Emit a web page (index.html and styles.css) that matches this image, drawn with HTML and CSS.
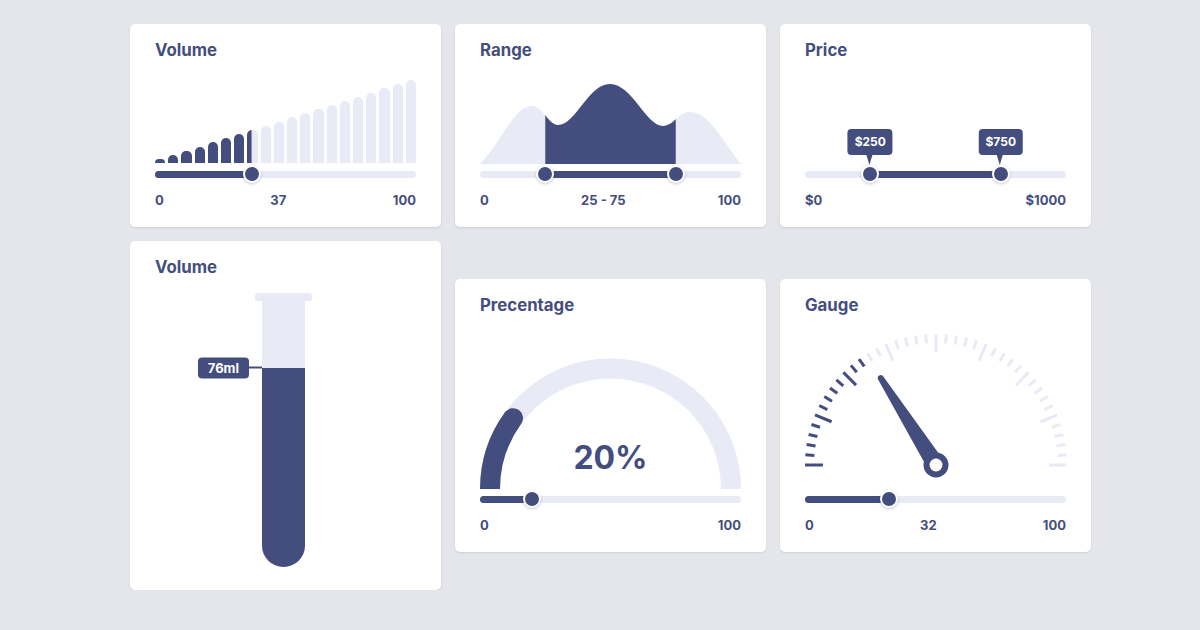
FILE: index.html
```html
<!DOCTYPE html>
<html lang="en">
<head>
<meta charset="utf-8">
<title>Sliders</title>
<link rel="stylesheet" href="styles.css">
</head>
<body>
<main class="board">

  <section class="card">
    <h2 class="card-title">Volume</h2>
    <div class="chart chart-bars">
      <div class="bars">
        <span class="bar" style="height:4px"></span><span class="bar" style="height:8.2px"></span><span class="bar" style="height:12.3px"></span><span class="bar" style="height:16.5px"></span><span class="bar" style="height:20.6px"></span><span class="bar" style="height:24.8px"></span><span class="bar" style="height:29px"></span><span class="bar" style="height:33.1px"></span><span class="bar" style="height:37.3px"></span><span class="bar" style="height:41.4px"></span><span class="bar" style="height:45.6px"></span><span class="bar" style="height:49.7px"></span><span class="bar" style="height:53.9px"></span><span class="bar" style="height:58.1px"></span><span class="bar" style="height:62.2px"></span><span class="bar" style="height:66.4px"></span><span class="bar" style="height:70.5px"></span><span class="bar" style="height:74.7px"></span><span class="bar" style="height:78.8px"></span><span class="bar" style="height:83px"></span>
      </div>
      <div class="bars bars-on" style="clip-path:inset(0 63% 0 0)">
        <span class="bar" style="height:4px"></span><span class="bar" style="height:8.2px"></span><span class="bar" style="height:12.3px"></span><span class="bar" style="height:16.5px"></span><span class="bar" style="height:20.6px"></span><span class="bar" style="height:24.8px"></span><span class="bar" style="height:29px"></span><span class="bar" style="height:33.1px"></span><span class="bar" style="height:37.3px"></span><span class="bar" style="height:41.4px"></span><span class="bar" style="height:45.6px"></span><span class="bar" style="height:49.7px"></span><span class="bar" style="height:53.9px"></span><span class="bar" style="height:58.1px"></span><span class="bar" style="height:62.2px"></span><span class="bar" style="height:66.4px"></span><span class="bar" style="height:70.5px"></span><span class="bar" style="height:74.7px"></span><span class="bar" style="height:78.8px"></span><span class="bar" style="height:83px"></span>
      </div>
    </div>
    <div class="slider">
      <div class="track">
        <div class="fill" style="width:37%"></div>
        <span class="thumb" style="left:37%"></span>
      </div>
    </div>
    <div class="scale"><span>0</span><span>37</span><span>100</span></div>
  </section>

  <section class="card">
    <h2 class="card-title">Range</h2>
    <div class="chart chart-bottom">
      <svg class="area" viewBox="0 0 261 80" width="261" height="80">
        <defs>
          <clipPath id="range-clip"><rect x="65.25" y="0" width="130.5" height="80"/></clipPath>
        </defs>
        <path class="area-off" d="M0,80 C20,60 34,22 52,22 C63,22 68,41 78,41 C96,41 108,0 130,0 C152,0 166,42 183,42 C194,42 198,28 210,28 C230,28 244,60 261,80 Z"/>
        <path class="area-on" clip-path="url(#range-clip)" d="M0,80 C20,60 34,22 52,22 C63,22 68,41 78,41 C96,41 108,0 130,0 C152,0 166,42 183,42 C194,42 198,28 210,28 C230,28 244,60 261,80 Z"/>
      </svg>
    </div>
    <div class="slider">
      <div class="track">
        <div class="fill" style="margin-left:25%;width:50%"></div>
        <span class="thumb" style="left:25%"></span>
        <span class="thumb" style="left:75%"></span>
      </div>
    </div>
    <div class="scale"><span>0</span><span>25 - 75</span><span>100</span></div>
  </section>

  <section class="card">
    <h2 class="card-title">Price</h2>
    <div class="chart"></div>
    <div class="slider">
      <div class="track">
        <div class="fill" style="margin-left:25%;width:50%"></div>
        <span class="thumb" style="left:25%"><span class="tip">$250</span></span>
        <span class="thumb" style="left:75%"><span class="tip">$750</span></span>
      </div>
    </div>
    <div class="scale"><span>$0</span><span>$1000</span></div>
  </section>

  <section class="card card-tube">
    <h2 class="card-title">Volume</h2>
    <div class="tube-wrap">
      <div class="tube-lip"></div>
      <div class="tube">
        <div class="tube-fill" style="height:75%">
          <span class="tube-level">76ml</span>
        </div>
      </div>
    </div>
  </section>

  <section class="card">
    <h2 class="card-title">Precentage</h2>
    <div class="chart chart-tall">
      <svg class="dial" viewBox="0 0 261 174" width="261" height="174">
        <path class="arc-off" d="M10,174 A120.5,120.5 0 0 1 251,174"/>
        <path class="arc-on" d="M10,174 A120.5,120.5 0 0 1 33,103.2"/>
        <text class="dial-value" x="130.5" y="154" text-anchor="middle">20%</text>
      </svg>
    </div>
    <div class="slider">
      <div class="track">
        <div class="fill" style="width:20%"></div>
        <span class="thumb" style="left:20%"></span>
      </div>
    </div>
    <div class="scale"><span>0</span><span>100</span></div>
  </section>

  <section class="card">
    <h2 class="card-title">Gauge</h2>
    <div class="chart chart-tall">
      <svg class="dial" viewBox="0 0 261 174" width="261" height="174">
        <g transform="translate(131,150)">
          <g class="ticks-on">
            <line x1="-131" y1="0" x2="-113" y2="0" transform="rotate(0)"/>
            <line x1="-131" y1="0" x2="-122" y2="0" transform="rotate(4.5)"/>
            <line x1="-131" y1="0" x2="-122" y2="0" transform="rotate(9)"/>
            <line x1="-131" y1="0" x2="-122" y2="0" transform="rotate(13.5)"/>
            <line x1="-131" y1="0" x2="-122" y2="0" transform="rotate(18)"/>
            <line x1="-131" y1="0" x2="-113" y2="0" transform="rotate(22.5)"/>
            <line x1="-131" y1="0" x2="-122" y2="0" transform="rotate(27)"/>
            <line x1="-131" y1="0" x2="-122" y2="0" transform="rotate(31.5)"/>
            <line x1="-131" y1="0" x2="-122" y2="0" transform="rotate(36)"/>
            <line x1="-131" y1="0" x2="-122" y2="0" transform="rotate(40.5)"/>
            <line x1="-131" y1="0" x2="-113" y2="0" transform="rotate(45)"/>
            <line x1="-131" y1="0" x2="-122" y2="0" transform="rotate(49.5)"/>
            <line x1="-131" y1="0" x2="-122" y2="0" transform="rotate(54)"/>
          </g>
          <g class="ticks-off">
            <line x1="-131" y1="0" x2="-122" y2="0" transform="rotate(58.5)"/>
            <line x1="-131" y1="0" x2="-122" y2="0" transform="rotate(63)"/>
            <line x1="-131" y1="0" x2="-113" y2="0" transform="rotate(67.5)"/>
            <line x1="-131" y1="0" x2="-122" y2="0" transform="rotate(72)"/>
            <line x1="-131" y1="0" x2="-122" y2="0" transform="rotate(76.5)"/>
            <line x1="-131" y1="0" x2="-122" y2="0" transform="rotate(81)"/>
            <line x1="-131" y1="0" x2="-122" y2="0" transform="rotate(85.5)"/>
            <line x1="-131" y1="0" x2="-113" y2="0" transform="rotate(90)"/>
            <line x1="-131" y1="0" x2="-122" y2="0" transform="rotate(94.5)"/>
            <line x1="-131" y1="0" x2="-122" y2="0" transform="rotate(99)"/>
            <line x1="-131" y1="0" x2="-122" y2="0" transform="rotate(103.5)"/>
            <line x1="-131" y1="0" x2="-122" y2="0" transform="rotate(108)"/>
            <line x1="-131" y1="0" x2="-113" y2="0" transform="rotate(112.5)"/>
            <line x1="-131" y1="0" x2="-122" y2="0" transform="rotate(117)"/>
            <line x1="-131" y1="0" x2="-122" y2="0" transform="rotate(121.5)"/>
            <line x1="-131" y1="0" x2="-122" y2="0" transform="rotate(126)"/>
            <line x1="-131" y1="0" x2="-122" y2="0" transform="rotate(130.5)"/>
            <line x1="-131" y1="0" x2="-113" y2="0" transform="rotate(135)"/>
            <line x1="-131" y1="0" x2="-122" y2="0" transform="rotate(139.5)"/>
            <line x1="-131" y1="0" x2="-122" y2="0" transform="rotate(144)"/>
            <line x1="-131" y1="0" x2="-122" y2="0" transform="rotate(148.5)"/>
            <line x1="-131" y1="0" x2="-122" y2="0" transform="rotate(153)"/>
            <line x1="-131" y1="0" x2="-113" y2="0" transform="rotate(157.5)"/>
            <line x1="-131" y1="0" x2="-122" y2="0" transform="rotate(162)"/>
            <line x1="-131" y1="0" x2="-122" y2="0" transform="rotate(166.5)"/>
            <line x1="-131" y1="0" x2="-122" y2="0" transform="rotate(171)"/>
            <line x1="-131" y1="0" x2="-122" y2="0" transform="rotate(175.5)"/>
            <line x1="-131" y1="0" x2="-113" y2="0" transform="rotate(180)"/>
          </g>
          <path class="needle" transform="rotate(57.6)" d="M0,-9 L-103,-3 A3,3 0 0 0 -103,3 L0,9 Z"/>
          <circle class="needle" r="12.5"/>
          <circle class="pivot" r="6.5"/>
        </g>
      </svg>
    </div>
    <div class="slider">
      <div class="track">
        <div class="fill" style="width:32%"></div>
        <span class="thumb" style="left:32%"></span>
      </div>
    </div>
    <div class="scale"><span>0</span><span>32</span><span>100</span></div>
  </section>

</main>
</body>
</html>
```

FILE: styles.css
```css
* {
  box-sizing: border-box;
}

body {
  margin: 0;
  background: #e5e6eb;
  font-family: Inter, "Noto Sans", "Liberation Sans", sans-serif;
  color: #444e7e;
}

.board {
  display: grid;
  grid-template-columns: repeat(3, 311px);
  gap: 14px;
  align-items: center;
  padding: 24px 0 0 130px;
}

.card {
  background: #ffffff;
  border-radius: 5px;
  padding: 16px 25px 19px;
  box-shadow: 0 1px 2px rgba(40, 45, 80, 0.12);
}

.card-tube {
  padding-bottom: 23px;
}

.card-title {
  margin: 0;
  font-size: 16.8px;
  line-height: 20px;
  font-weight: 700;
}

.chart {
  height: 104px;
}

.chart-tall {
  height: 174px;
}

.chart-bottom {
  display: flex;
  align-items: flex-end;
}

.chart-bars {
  display: grid;
}

.bars {
  grid-area: 1 / 1;
  display: flex;
  align-items: flex-end;
  gap: 3px;
  padding-bottom: 1px;
}

.bar {
  flex: 1;
  background: #e8eaf6;
  border-radius: 5px 5px 0 0;
}

.bars-on .bar {
  background: #444e7e;
}

.area,
.dial {
  display: block;
}

.area-off {
  fill: #e8eaf6;
}

.area-on {
  fill: #444e7e;
}

.slider {
  height: 20px;
  display: flex;
  align-items: center;
}

.track {
  position: relative;
  flex: 1;
  height: 7px;
  border-radius: 4px;
  background: #e8eaf6;
}

.fill {
  height: 100%;
  border-radius: 4px;
  background: #444e7e;
}

.thumb {
  position: absolute;
  top: 50%;
  width: 18px;
  height: 18px;
  margin: -9px 0 0 -9px;
  border-radius: 50%;
  border: 2px solid #ffffff;
  background: #444e7e;
  box-shadow: 0 1px 3px rgba(30, 35, 70, 0.25);
}

.tip {
  position: absolute;
  left: 50%;
  bottom: calc(100% + 12.5px);
  transform: translateX(-50%);
  padding: 5px 7px;
  border-radius: 4px;
  background: #444e7e;
  color: #ffffff;
  font-size: 12px;
  line-height: 16px;
  font-weight: 700;
  white-space: nowrap;
}

.tip::after {
  content: "";
  position: absolute;
  top: 100%;
  left: 50%;
  margin-left: -3.5px;
  border-left: 3.5px solid transparent;
  border-right: 3.5px solid transparent;
  border-top: 10px solid #444e7e;
}

.scale {
  display: flex;
  justify-content: space-between;
  margin-top: 8px;
  font-size: 13px;
  line-height: 16px;
  font-weight: 700;
}

.tube-wrap {
  display: flex;
  flex-direction: column;
  align-items: center;
  margin-top: 16px;
  padding-right: 4px;
}

.tube-lip {
  width: 57px;
  height: 8px;
  border-radius: 3px;
  background: #e8eaf6;
}

.tube {
  width: 43px;
  height: 266px;
  display: flex;
  flex-direction: column;
  justify-content: flex-end;
  border-radius: 0 0 21.5px 21.5px;
  background: #e8eaf6;
}

.tube-fill {
  position: relative;
  border-radius: 0 0 21.5px 21.5px;
  background: #444e7e;
}

.tube-level {
  position: absolute;
  top: 0;
  right: calc(100% + 13px);
  transform: translateY(-50%);
  padding: 0 10px;
  border-radius: 4px;
  background: #444e7e;
  color: #ffffff;
  font-size: 13px;
  line-height: 21px;
  font-weight: 700;
  white-space: nowrap;
}

.tube-level::after {
  content: "";
  position: absolute;
  left: 100%;
  top: 50%;
  width: 13px;
  height: 2px;
  margin-top: -1px;
  background: #444e7e;
}

.arc-off {
  fill: none;
  stroke: #e8eaf6;
  stroke-width: 20;
}

.arc-on {
  fill: none;
  stroke: #444e7e;
  stroke-width: 20;
  stroke-linecap: round;
}

.dial-value {
  fill: #444e7e;
  font-family: Inter, "Noto Sans", "Liberation Sans", sans-serif;
  font-size: 32px;
  font-weight: 700;
}

.ticks-on line,
.ticks-off line {
  stroke-width: 3;
}

.ticks-on line {
  stroke: #444e7e;
}

.ticks-off line {
  stroke: #e8eaf6;
}

.needle {
  fill: #444e7e;
}

.pivot {
  fill: #ffffff;
}
```
